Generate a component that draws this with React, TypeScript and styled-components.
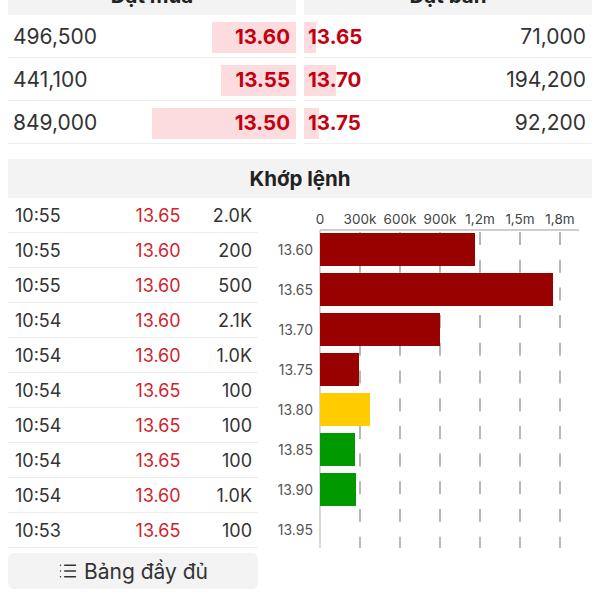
import React from "react";
import styled, { createGlobalStyle } from "styled-components";
import { List } from "lucide-react";

const GlobalStyle = createGlobalStyle`
  html, body { margin: 0; padding: 0; background: #fff; }
  body {
    font-family: Inter, "Noto Sans", "Liberation Sans", sans-serif;
    color: #333;
    overflow: hidden;
  }
`;

const Page = styled.div`
  width: 600px;
  height: 600px;
  overflow: hidden;
`;

const Content = styled.div`
  margin-top: -24px;
  padding: 0 8px;
`;

const BookGrid = styled.div`
  display: grid;
  grid-template-columns: 1fr 1fr;
  gap: 8px;
`;

const BookSide = styled.div`
  display: flex;
  flex-direction: column;
`;

const SectionHeader = styled.div`
  height: 39px;
  line-height: 40px;
  background: #f3f3f3;
  text-align: center;
  font-weight: 700;
  font-size: 20.5px;
  color: #222;
`;

const BookRow = styled.div<{ $side: "buy" | "sell" }>`
  position: relative;
  height: 42px;
  border-bottom: 1px solid #eeeeee;
  display: flex;
  align-items: center;
  justify-content: space-between;
  padding: ${(p) => (p.$side === "buy" ? "0 6px 0 5px" : "0 6px 0 4px")};
`;

const DepthBar = styled.div<{ $side: "buy" | "sell" }>`
  position: absolute;
  top: 7px;
  height: 31px;
  background: #fcdcdf;
  ${(p) => (p.$side === "buy" ? "right: 0;" : "left: 0;")}
`;

const Volume = styled.span`
  position: relative;
  font-size: 21px;
  color: #333;
`;

const BookPrice = styled.span`
  position: relative;
  font-size: 20.5px;
  font-weight: 700;
  color: #c20010;
`;

const MatchSection = styled.div`
  margin-top: 15px;
`;

const MatchBody = styled.div`
  display: grid;
  grid-template-columns: 250px 1fr;
  gap: 4px;
`;

const TradeColumn = styled.div`
  display: flex;
  flex-direction: column;
`;

const TradeRow = styled.div`
  display: grid;
  grid-template-columns: 93px 100px 1fr;
  align-items: center;
  height: 34px;
  border-bottom: 1px solid #eeeeee;
  padding: 0 6px 0 7px;
  font-size: 18px;
`;

const Time = styled.span`
  color: #333;
`;

const TradePrice = styled.span`
  color: #d21f2c;
  text-align: center;
`;

const TradeVol = styled.span`
  color: #333;
  text-align: right;
`;

const FullButton = styled.button`
  margin-top: 5px;
  height: 36px;
  border: none;
  border-radius: 6px;
  background: #f3f3f3;
  display: flex;
  align-items: center;
  justify-content: center;
  gap: 6px;
  font-family: inherit;
  font-size: 21px;
  color: #333;
  padding: 0;
`;

const ChartWrap = styled.div`
  padding-top: 4px;
`;

const buys = [
  { vol: "496,500", price: "13.60", w: 84 },
  { vol: "441,100", price: "13.55", w: 75 },
  { vol: "849,000", price: "13.50", w: 144 },
];

const sells = [
  { vol: "71,000", price: "13.65", w: 12 },
  { vol: "194,200", price: "13.70", w: 32 },
  { vol: "92,200", price: "13.75", w: 15 },
];

const trades = [
  ["10:55", "13.65", "2.0K"],
  ["10:55", "13.60", "200"],
  ["10:55", "13.60", "500"],
  ["10:54", "13.60", "2.1K"],
  ["10:54", "13.60", "1.0K"],
  ["10:54", "13.65", "100"],
  ["10:54", "13.65", "100"],
  ["10:54", "13.65", "100"],
  ["10:54", "13.60", "1.0K"],
  ["10:53", "13.65", "100"],
];

const chartRows = [
  { p: "13.60", w: 155, c: "#990000" },
  { p: "13.65", w: 233, c: "#990000" },
  { p: "13.70", w: 120, c: "#990000" },
  { p: "13.75", w: 39, c: "#990000" },
  { p: "13.80", w: 50, c: "#ffcc00" },
  { p: "13.85", w: 35, c: "#009900" },
  { p: "13.90", w: 36, c: "#009900" },
  { p: "13.95", w: 0, c: "#009900" },
];

const ticks = ["0", "300k", "600k", "900k", "1,2m", "1,5m", "1,8m"];

function VolumeChart() {
  const x0 = 58;
  const step = 40;
  return (
    <svg width="330" height="350" viewBox="0 0 330 350">
      {ticks.map((t, i) => (
        <text
          key={t}
          x={x0 + i * step}
          y={22}
          textAnchor="middle"
          fontSize="13.5"
          fill="#444"
          fontFamily="Inter, sans-serif"
        >
          {t}
        </text>
      ))}
      {ticks.slice(1).map((t, i) => (
        <line
          key={"g" + t}
          x1={x0 + (i + 1) * step}
          x2={x0 + (i + 1) * step}
          y1={30}
          y2={346}
          stroke="#b8b8b8"
          strokeWidth="2"
          strokeDasharray="13 14.7"
        />
      ))}
      <line x1={x0} x2={317} y1={28} y2={28} stroke="#cfcfcf" strokeWidth="2" />
      <line x1={x0} x2={x0} y1={28} y2={346} stroke="#c5d3c5" strokeWidth="1.5" />
      {chartRows.map((r, i) => (
        <g key={r.p}>
          <text
            x={51}
            y={53 + i * 40}
            textAnchor="end"
            fontSize="14"
            fill="#555"
            fontFamily="Inter, sans-serif"
          >
            {r.p}
          </text>
          {r.w > 0 && (
            <rect x={x0} y={31 + i * 40} width={r.w} height={33} fill={r.c} />
          )}
        </g>
      ))}
    </svg>
  );
}

export default function App() {
  return (
    <Page>
      <GlobalStyle />
      <Content>
        <BookGrid>
          <BookSide>
            <SectionHeader>Đặt mua</SectionHeader>
            {buys.map((b) => (
              <BookRow $side="buy" key={b.price}>
                <DepthBar $side="buy" style={{ width: b.w }} />
                <Volume>{b.vol}</Volume>
                <BookPrice>{b.price}</BookPrice>
              </BookRow>
            ))}
          </BookSide>
          <BookSide>
            <SectionHeader>Đặt bán</SectionHeader>
            {sells.map((s) => (
              <BookRow $side="sell" key={s.price}>
                <DepthBar $side="sell" style={{ width: s.w }} />
                <BookPrice>{s.price}</BookPrice>
                <Volume>{s.vol}</Volume>
              </BookRow>
            ))}
          </BookSide>
        </BookGrid>
        <MatchSection>
          <SectionHeader>Khớp lệnh</SectionHeader>
          <MatchBody>
            <TradeColumn>
              {trades.map((t, i) => (
                <TradeRow key={i}>
                  <Time>{t[0]}</Time>
                  <TradePrice>{t[1]}</TradePrice>
                  <TradeVol>{t[2]}</TradeVol>
                </TradeRow>
              ))}
              <FullButton>
                <List size={20} strokeWidth={1.8} />
                Bảng đầy đủ
              </FullButton>
            </TradeColumn>
            <ChartWrap>
              <VolumeChart />
            </ChartWrap>
          </MatchBody>
        </MatchSection>
      </Content>
    </Page>
  );
}
